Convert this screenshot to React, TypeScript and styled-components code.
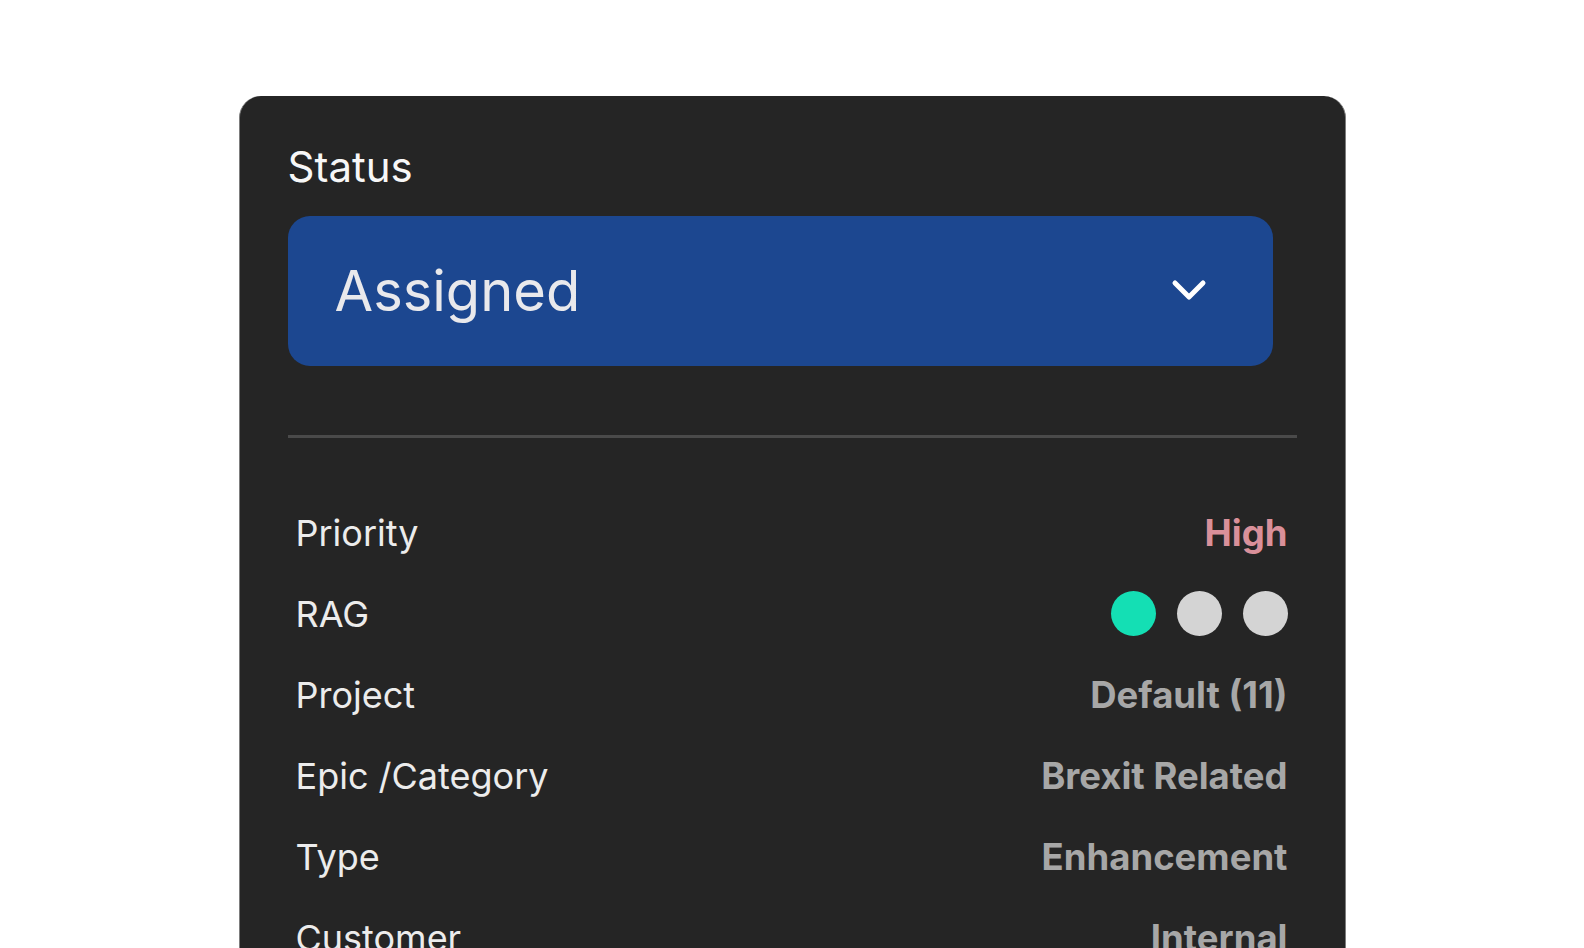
import React from "react";
import styled, { createGlobalStyle } from "styled-components";

const Global = createGlobalStyle`
  html, body {
    margin: 0;
    padding: 0;
    background: #ffffff;
    font-family: Inter, "Noto Sans", "Liberation Sans", sans-serif;
  }
  body { overflow: hidden; }
`;

const Page = styled.div`
  display: flex;
  justify-content: center;
  padding-top: 96px;
`;

const Card = styled.section`
  width: 1107px;
  box-sizing: border-box;
  background: #252525;
  border-radius: 22px 22px 0 0;
  border-left: 1px solid #7d7d7d;
  border-right: 1px solid #7d7d7d;
  padding: 46px 48px 60px 48px;
  display: flex;
  flex-direction: column;
`;

const Label = styled.div`
  font-size: 42px;
  line-height: 50px;
  color: #f7f7f7;
  font-weight: 400;
`;

const Select = styled.button`
  margin-top: 24px;
  margin-right: 24px;
  height: 150px;
  border: none;
  border-radius: 22px;
  background: #1c4790;
  display: flex;
  align-items: center;
  justify-content: space-between;
  padding: 0 66px 0 47px;
  font-family: inherit;
  cursor: pointer;
`;

const SelectText = styled.span`
  font-size: 56px;
  line-height: 68px;
  color: #e9e9ec;
  font-weight: 400;
`;

const Divider = styled.hr`
  margin: 69px 0 54px 0;
  border: none;
  height: 3px;
  background: #4a4a4a;
`;

const Rows = styled.div`
  display: flex;
  flex-direction: column;
`;

const Row = styled.div`
  height: 81px;
  display: flex;
  align-items: center;
  justify-content: space-between;
  padding: 0 9px 0 8px;
`;

const RowLabel = styled.span`
  font-size: 36px;
  line-height: 44px;
  color: #ececec;
`;

const RowValue = styled.span<{ $accent?: boolean }>`
  font-size: 36.5px;
  line-height: 44px;
  font-weight: 700;
  color: ${(p) => (p.$accent ? "#d9909a" : "#a7a7a7")};
`;

const Dots = styled.div`
  display: flex;
  gap: 21px;
`;

const Dot = styled.span<{ $color: string }>`
  width: 45px;
  height: 45px;
  border-radius: 50%;
  background: ${(p) => p.$color};
`;

const Chevron = () => (
  <svg width="36" height="24" viewBox="0 0 36 24" fill="none">
    <path
      d="M4 4 L18 18 L32 4"
      stroke="#ffffff"
      strokeWidth="5"
      strokeLinecap="round"
      strokeLinejoin="round"
    />
  </svg>
);

const rows: { label: string; value?: string; accent?: boolean; rag?: boolean }[] = [
  { label: "Priority", value: "High", accent: true },
  { label: "RAG", rag: true },
  { label: "Project", value: "Default (11)" },
  { label: "Epic /Category", value: "Brexit Related" },
  { label: "Type", value: "Enhancement" },
  { label: "Customer", value: "Internal" },
  { label: "Assignee", value: "Unassigned" },
];

export default function App() {
  return (
    <>
      <Global />
      <Page>
        <Card>
          <Label>Status</Label>
          <Select>
            <SelectText>Assigned</SelectText>
            <Chevron />
          </Select>
          <Divider />
          <Rows>
            {rows.map((r) => (
              <Row key={r.label}>
                <RowLabel>{r.label}</RowLabel>
                {r.rag ? (
                  <Dots>
                    <Dot $color="#14dfb4" />
                    <Dot $color="#d4d4d4" />
                    <Dot $color="#d4d4d4" />
                  </Dots>
                ) : (
                  <RowValue $accent={r.accent}>{r.value}</RowValue>
                )}
              </Row>
            ))}
          </Rows>
        </Card>
      </Page>
    </>
  );
}
